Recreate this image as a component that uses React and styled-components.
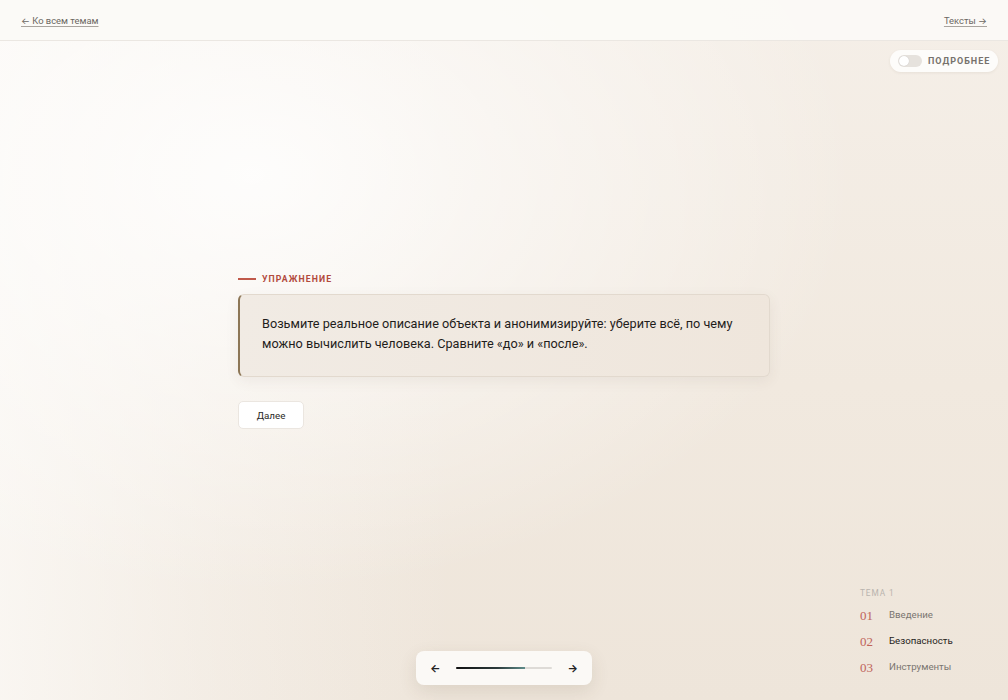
import React from 'react';
import styled, { createGlobalStyle } from 'styled-components';

const GlobalStyle = createGlobalStyle`
  html, body {
    margin: 0;
    padding: 0;
    height: 100%;
  }
  body {
    font-family: Roboto, Inter, "Noto Sans", sans-serif;
    color: #222;
    background: #f1eae1;
  }
  * { box-sizing: border-box; }
`;

const Page = styled.div`
  position: relative;
  min-height: 100vh;
  overflow: hidden;
  background:
    radial-gradient(ellipse 60% 60% at 25% 25%, rgba(255,255,255,0.85) 0%, rgba(255,255,255,0) 100%),
    linear-gradient(90deg, rgba(252,250,247,0.8) 0%, rgba(252,250,247,0.35) 22%, rgba(252,250,247,0) 45%),
    linear-gradient(180deg, #f5efe8 0%, #f1e9df 55%, #eee5da 100%);
`;

const Header = styled.header`
  height: 41px;
  display: flex;
  align-items: center;
  justify-content: space-between;
  padding: 0 21px;
  background: rgba(251, 250, 247, 0.94);
  border-bottom: 1px solid #ebe7e2;
`;

const HeaderLink = styled.a`
  font-size: 9.4px;
  color: #6b6762;
  text-decoration: underline;
  text-underline-offset: 2px;
  text-decoration-color: #a9a49e;
  cursor: pointer;
`;

const DetailToggle = styled.div`
  position: absolute;
  top: 50px;
  right: 10px;
  width: 108px;
  height: 22px;
  display: flex;
  align-items: center;
  gap: 6px;
  padding: 0 8px;
  border-radius: 11px;
  background: rgba(255, 255, 255, 0.8);
  box-shadow: 0 1px 3px rgba(80, 60, 40, 0.08);
`;

const Switch = styled.span`
  flex: none;
  width: 24px;
  height: 12px;
  border-radius: 6px;
  background: #e6e2dd;
  position: relative;
  &::after {
    content: '';
    position: absolute;
    top: 1px;
    left: 1px;
    width: 10px;
    height: 10px;
    border-radius: 50%;
    background: #fff;
    box-shadow: 0 0 1px rgba(0,0,0,0.2);
  }
`;

const ToggleLabel = styled.span`
  font-size: 9px;
  font-weight: 700;
  letter-spacing: 1px;
  color: #77726c;
`;

const Main = styled.main`
  width: 532px;
  margin: 0 auto;
  padding-top: 233px;
  display: flex;
  flex-direction: column;
  align-items: flex-start;
`;

const Eyebrow = styled.div`
  display: flex;
  align-items: center;
  gap: 6px;
  font-size: 8.7px;
  font-weight: 700;
  letter-spacing: 1.1px;
  color: #b24a3c;
  &::before {
    content: '';
    width: 18px;
    height: 2px;
    background: #c0594a;
  }
`;

const Card = styled.div`
  margin-top: 10px;
  width: 100%;
  padding: 19px 22px 22px 22px;
  border: 1px solid #e2d9ce;
  border-left: 2px solid #8c7656;
  border-radius: 6px;
  background: linear-gradient(100deg, #f1ebe4 0%, #efe6dc 100%);
  box-shadow: 0 4px 14px rgba(90, 70, 50, 0.07);
  font-size: 12.7px;
  line-height: 20px;
  color: #1f1d1b;
`;

const NextButton = styled.button`
  margin-top: 24px;
  width: 66px;
  height: 28px;
  background: #fff;
  border: 1px solid #ebe6e0;
  border-radius: 5px;
  font-family: Roboto, Inter, sans-serif;
  font-size: 9.8px;
  color: #2a2826;
  cursor: pointer;
`;

const Toc = styled.nav`
  position: absolute;
  left: 860px;
  top: 588px;
  display: flex;
  flex-direction: column;
`;

const TocTitle = styled.div`
  font-size: 8.3px;
  letter-spacing: 0.9px;
  color: #b9b4ae;
  margin-bottom: 3px;
`;

const TocItem = styled.div`
  display: flex;
  align-items: center;
  height: 26px;
`;

const TocNum = styled.span`
  width: 29px;
  font-family: "Liberation Serif", "DejaVu Serif", serif;
  font-size: 13px;
  font-variant-numeric: oldstyle-nums;
  color: #c0645a;
  padding-top: 3px;
`;

const TocLabel = styled.span`
  font-size: 9.7px;
  color: ${(p) => (p.$active ? '#1e1c1a' : '#7a7570')};
`;

const Pager = styled.div`
  position: absolute;
  left: 416px;
  bottom: 15px;
  width: 176px;
  height: 34px;
  display: flex;
  align-items: center;
  justify-content: space-between;
  padding: 0 14px 0 14px;
  border-radius: 8px;
  background: #fbf9f6;
  box-shadow: 0 6px 18px rgba(90, 70, 50, 0.12);
`;

const ArrowBtn = styled.span`
  font-size: 11px;
  font-weight: 700;
  color: #222;
  line-height: 1;
`;

const Track = styled.div`
  width: 96px;
  height: 2px;
  background: #dedbd7;
  border-radius: 1px;
  overflow: hidden;
`;

const Fill = styled.div`
  height: 100%;
  background: linear-gradient(90deg, #111 0%, #2b3a3b 60%, #5f8c8a 100%);
`;

const topics = [
  { n: '01', label: 'Введение' },
  { n: '02', label: 'Безопасность', active: true },
  { n: '03', label: 'Инструменты' },
];

export default function App() {
  const progress = 72;
  return (
    <>
      <GlobalStyle />
      <Page>
        <Header>
          <HeaderLink>← Ко всем темам</HeaderLink>
          <HeaderLink>Тексты →</HeaderLink>
        </Header>

        <DetailToggle>
          <Switch />
          <ToggleLabel>ПОДРОБНЕЕ</ToggleLabel>
        </DetailToggle>

        <Main>
          <Eyebrow>УПРАЖНЕНИЕ</Eyebrow>
          <Card>
            Возьмите реальное описание объекта и анонимизируйте: уберите всё, по чему
            можно вычислить человека. Сравните «до» и «после».
          </Card>
          <NextButton>Далее</NextButton>
        </Main>

        <Toc>
          <TocTitle>ТЕМА 1</TocTitle>
          {topics.map((t) => (
            <TocItem key={t.n}>
              <TocNum>{t.n}</TocNum>
              <TocLabel $active={t.active}>{t.label}</TocLabel>
            </TocItem>
          ))}
        </Toc>

        <Pager>
          <ArrowBtn>←</ArrowBtn>
          <Track>
            <Fill style={{ width: `${progress}%` }} />
          </Track>
          <ArrowBtn>→</ArrowBtn>
        </Pager>
      </Page>
    </>
  );
}
